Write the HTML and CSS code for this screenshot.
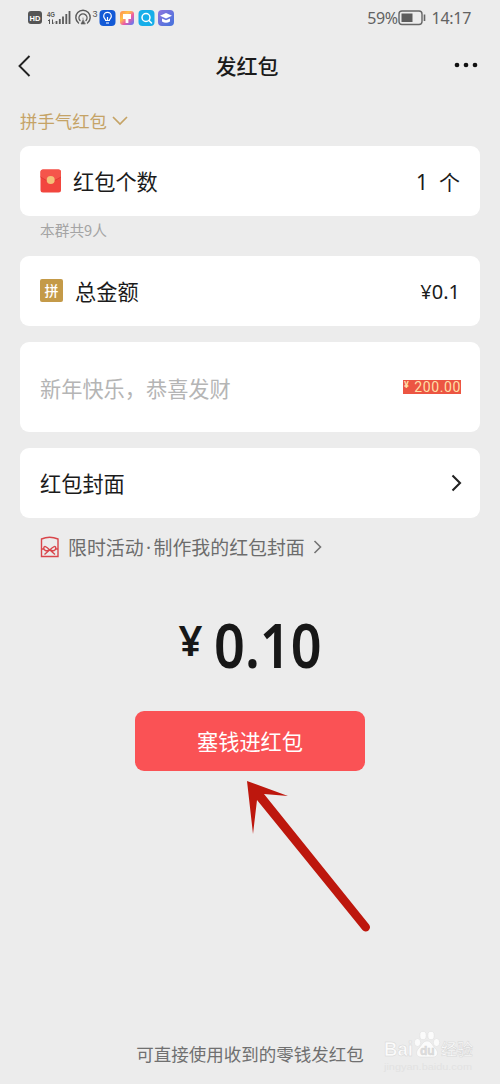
FILE: index.html
```html
<!DOCTYPE html>
<html lang="zh-CN">
<head>
<meta charset="utf-8">
<title>发红包</title>
<link rel="stylesheet" href="styles.css">
</head>
<body>
<main class="screen">
  <div class="status">
    <svg class="status-icons" width="150" height="20" viewBox="0 0 150 20">
      <rect x="1" y="3" width="14" height="13" rx="3" fill="#555"/>
      <text x="8" y="12.500" class="hd">HD</text>
      <text x="20" y="9" class="net" textLength="8" lengthAdjust="spacingAndGlyphs">4G</text>
      <path d="M22.500 16v-4.500l-1.500 1.500M25.500 11.500V16l1.500-1.500" stroke="#555" stroke-width="1" fill="none"/>
      <path d="M29.500 16v-3M32.800 16v-5M36 16V8.500M39.300 16V6M42.500 16V3" stroke="#5a5a5a" stroke-width="1.800"/>
      <g fill="none" stroke="#5a5a5a" stroke-width="1.400" stroke-linecap="round">
        <path d="M51.500 15a7.200 7.200 0 1 1 9 0"/>
        <path d="M53 12.500a4 4 0 1 1 6 0"/>
        <path d="M56 10v1M56 12l-2 4h4z" fill="#5a5a5a" stroke-width=".6"/>
      </g>
      <text x="65.500" y="9" class="hotspot">3</text>
      <rect x="72.500" y="2" width="16" height="16" rx="4" fill="#1259d6"/>
      <path d="M78.700 12.500c0-1.500-2-2-2-4.300a3.800 3.800 0 0 1 7.600 0c0 2.300-2 2.800-2 4.300zM79 15h3M80.500 9v3" fill="none" stroke="#fff" stroke-width="1.200"/>
      <defs>
        <linearGradient id="warm" x1="0" y1="0" x2="1" y2="1"><stop stop-color="#ff8b52"/><stop offset=".35" stop-color="#ffc24a"/><stop offset=".6" stop-color="#ef5aa3"/><stop offset="1" stop-color="#4a7dff"/></linearGradient>
        <linearGradient id="violet" x1="0" y1="0" x2="1" y2="1"><stop stop-color="#8d74de"/><stop offset="1" stop-color="#4272dc"/></linearGradient>
      </defs>
      <rect x="93" y="3" width="14" height="14" rx="3" fill="url(#warm)"/>
      <path d="M96 6h8v5h-2.600v4h-2.800v-4H96z" fill="#fff"/>
      <rect x="111.500" y="2" width="16" height="16" rx="4" fill="#16aee9"/>
      <circle cx="119" cy="9.500" r="4" fill="none" stroke="#fff" stroke-width="1.500"/>
      <path d="m122 12.500 2.500 2.500" stroke="#fff" stroke-width="1.500" stroke-linecap="round"/>
      <rect x="131" y="2" width="16" height="16" rx="4" fill="url(#violet)"/>
      <path d="m139 5 6 2.800-6 2.800-6-2.800z" fill="#fff"/>
      <path d="M135 10.500v3q4 2.500 8 0v-3l-4 1.800z" fill="#fff"/>
    </svg>
    <div class="status-right">
      <span class="percent">59%</span>
      <svg width="28" height="16" viewBox="0 0 28 16"><rect x="1" y="1" width="23" height="13.500" rx="3" fill="none" stroke="#666" stroke-width="1.400"/><rect x="3.500" y="3.500" width="11" height="8.500" fill="#5c5c5c"/><path d="M26.500 4.500V11" stroke="#666" stroke-width="1.600"/></svg>
      <span class="clock">14:17</span>
    </div>
  </div>

  <header class="header">
    <svg width="14" height="22" viewBox="0 0 14 22"><path d="M11.500 1 1.500 11l10 10" fill="none" stroke="#222" stroke-width="1.900"/></svg>
    <h1 class="title">发红包</h1>
    <svg width="24" height="6" viewBox="0 0 24 6" fill="#111"><circle cx="3" cy="3" r="2.350"/><circle cx="12" cy="3" r="2.350"/><circle cx="21" cy="3" r="2.350"/></svg>
  </header>

  <div class="type">拼手气红包<svg width="18" height="12" viewBox="0 0 18 12"><path d="m2 3 7 7 7-7" fill="none" stroke="#c5a366" stroke-width="1.700"/></svg></div>

  <section class="card">
    <svg class="envelope" width="21" height="24" viewBox="0 0 21 24"><rect x=".5" y=".5" width="20.500" height="23" rx="2.500" fill="#f2463e"/><path d="M.5 8V3A2.500 2.500 0 0 1 3 .5h15.500A2.500 2.500 0 0 1 21 3v5Q10.500 16 .5 8" fill="#f5554b"/><path d="M.5 8q10 8 20.500 0" fill="none" stroke="#d93630" stroke-width=".8"/><circle cx="10.700" cy="11" r="4" fill="#f5c078"/></svg>
    <span class="label">红包个数</span>
    <span class="value count"><span class="digit">1</span><span>个</span></span>
  </section>
  <p class="note">本群共9人</p>
  <section class="card total">
    <span class="badge">拼</span>
    <span class="label">总金额</span>
    <span class="value sum">¥0.1</span>
  </section>
  <section class="card greeting">
    <span class="placeholder">新年快乐，恭喜发财</span>
    <span class="sticker"><span class="yen">¥</span><span>200.00</span></span>
  </section>
  <section class="card cover">
    <span>红包封面</span>
    <svg width="11" height="18" viewBox="0 0 11 18"><path d="m1.500 1.500 7.500 7.500-7.500 7.500" fill="none" stroke="#222" stroke-width="2.100"/></svg>
  </section>
  <div class="promo">
    <svg width="20" height="22" viewBox="0 0 20 22" fill="none" stroke="#d9464b" stroke-width="1.400"><path d="M1.500 3Q9.500-.5 18 3v17.500H1.500zM1.500 13h3M15 13h3M9.800 14C6 10 4 9.500 3.800 12s2.500 3.500 6 2c3.500 1.500 6 .5 6-2s-2.300-2-6 2zM9 14.500l-4.500 4M10.500 14.500l4.500 4"/></svg>
    <span class="promo-text">限时活动<span class="dot">·</span>制作我的红包封面</span>
    <svg width="10" height="16" viewBox="0 0 10 16"><path d="m1.500 2 6 6-6 6" fill="none" stroke="#747474" stroke-width="1.600"/></svg>
  </div>

  <div class="amount"><span class="currency">¥</span><span class="number">0.10</span></div>
  <button class="submit">塞钱进红包</button>
  <p class="footer">可直接使用收到的零钱发红包</p>

  <svg class="arrow" width="130" height="160" viewBox="0 0 130 160"><path d="m7 1 41 15-24-2 105 130.500a4.200 4.200 0 0 1-6.500 5.500L17 20l-4 34z" fill="#bd170d"/></svg>
  <svg class="watermark" width="100" height="46" viewBox="0 0 100 46">
    <text x="3" y="28" class="brand" textLength="29" lengthAdjust="spacingAndGlyphs">Bai</text>
    <g class="paw"><ellipse cx="36.500" cy="14.500" rx="3.200" ry="4"/><ellipse cx="42" cy="7.500" rx="3.200" ry="4.200"/><ellipse cx="50" cy="7.500" rx="3.200" ry="4.200"/><ellipse cx="55.500" cy="14.500" rx="3.200" ry="4"/><path d="M46 13c-4 0-5 4-8 7-4 4-3 9 2 9h12c5 0 6-5 2-9-3-3-4-7-8-7z"/></g>
    <text x="39" y="27" class="du">du</text>
    <text x="60" y="27" class="exp">经验</text>
    <text x="3" y="42" class="url" textLength="88" lengthAdjust="spacingAndGlyphs">jingyan.baidu.com</text>
  </svg>
</main>
</body>
</html>
```
FILE: styles.css
```css
* { box-sizing: border-box; }
body {
  margin: 0;
  background: #ececec;
  color: #1b1b1b;
  font-family: "Noto Sans CJK SC", sans-serif;
}
.screen {
  position: relative;
  width: 500px;
  height: 1084px;
  overflow: hidden;
  display: flex;
  flex-direction: column;
  padding: 0 20px;
}
svg { display: block; flex: none; }
h1, p { margin: 0; }
.status {
  height: 36px;
  display: flex;
  justify-content: space-between;
  align-items: center;
  padding: 0 9px 0 7px;
  color: #626262;
}
.status-right { display: flex; align-items: center; font-size: 16px; font-family: "Noto Sans", sans-serif; }
.clock { margin-left: 6px; letter-spacing: -.3px; }
.percent { letter-spacing: -.4px; }
.hd { font: 700 7.500px "Liberation Sans", sans-serif; fill: #fff; text-anchor: middle; }
.net { font: 700 8px "Liberation Sans", sans-serif; fill: #555; }
.hotspot { font: 9px "Liberation Sans", sans-serif; fill: #555; }
.header {
  height: 60px;
  display: grid;
  grid-template-columns: 24px 1fr 24px;
  align-items: center;
  padding-right: 2px;
}
.header svg:first-child { margin-left: -2px; }
.header svg:last-child { margin-bottom: 2px; }
.title { padding: 0 4px 2px 0; font-size: 21px; font-weight: 500; line-height: 30px; text-align: center; }
.type {
  height: 50px;
  display: flex;
  align-items: center;
  gap: 4px;
  padding-bottom: 2px;
  font-size: 17.400px;
  color: #c5a366;
}
.card {
  height: 70px;
  flex: none;
  display: flex;
  align-items: center;
  padding: 0 20px 1px;
  border-radius: 9px;
  background: #fff;
  font-size: 21.200px;
}
.envelope { margin-right: 12px; }
.value { margin-left: auto; }
.digit, .sum { font-family: "Noto Sans", sans-serif; }
.sum { padding-top: 1px; font-size: 20px; }
.count { display: flex; align-items: baseline; gap: 11px; font-size: 21px; }
.note { height: 40px; padding: 0 20px; font-size: 14.700px; line-height: 27px; color: #a4a4a4; }
.badge {
  width: 23px;
  height: 23px;
  margin-right: 12px;
  border-radius: 2px;
  background: #c49a48;
  color: #fff;
  font-size: 14px;
  font-weight: 500;
  line-height: 22px;
  text-align: center;
}
.greeting { height: 90px; margin-top: 16px; justify-content: space-between; padding-bottom: 0; }
.placeholder { color: #b5b5b5; }
.sticker {
  width: 58px;
  height: 14px;
  display: flex;
  justify-content: space-between;
  margin-right: -1px;
  padding: 0 0 0 1px;
  background: #ec5542;
  color: #ffdfa7;
  font: 400 14px/14px Roboto, sans-serif;
  letter-spacing: .6px;
}
.yen { font-size: 9px; font-weight: 700; line-height: 11px; }
.cover { margin-top: 16px; justify-content: space-between; padding-right: 18px; }
.promo {
  height: 57px;
  display: flex;
  align-items: center;
  gap: 8px;
  padding-left: 20px;
  font-size: 18.900px;
  color: #6c6c6c;
}
.promo-text { display: flex; line-height: 28px; }
.dot { width: 10px; text-align: center; font-family: "Noto Sans", sans-serif; }
.amount {
  height: 136px;
  display: flex;
  justify-content: center;
  gap: 11px;
  font-family: "Noto Sans", sans-serif;
  font-weight: 600;
  line-height: 139px;
  color: #171717;
}
.currency { font-size: 42px; line-height: 129px; }
.number { width: 108px; font-size: 61px; transform: scaleX(.885); transform-origin: left; }
.submit {
  width: 230px;
  height: 60px;
  align-self: center;
  padding: 0;
  border: 0;
  border-radius: 9px;
  background: #fa5255;
  color: #fff;
  font: 21.200px/60px "Noto Sans CJK SC", sans-serif;
}
.footer { margin-top: auto; margin-bottom: 17px; text-align: center; font-size: 17.500px; line-height: 26px; color: #707070; }
.arrow { position: absolute; left: 240px; top: 780px; }
.watermark { position: absolute; left: 381px; top: 1028px; fill: #fbfbfb; }
.watermark text { stroke: #d5d5d5; stroke-width: .5px; }
.paw { stroke: #dadada; stroke-width: .5px; }
.brand { font: 700 21px "Liberation Sans", sans-serif; }
.du { font: 700 12px "Liberation Sans", sans-serif; fill: #ddd; }
.exp { font: 500 16px "Noto Sans CJK SC", sans-serif; }
.watermark .url { font: 9px "Liberation Sans", sans-serif; fill: #e2e2e2; stroke: none; }
```
